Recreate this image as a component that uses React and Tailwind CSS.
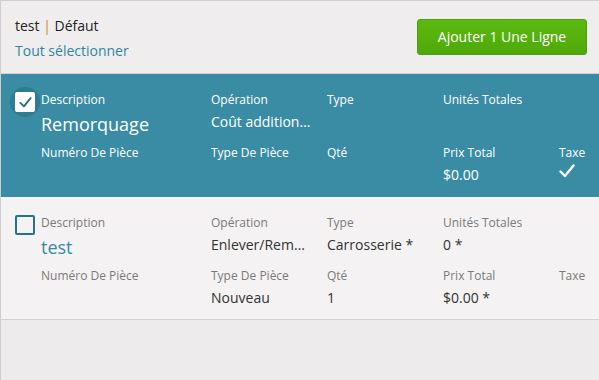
import React from "react";

const font = { fontFamily: '"Open Sans", "Noto Sans", sans-serif' };

function Check({ className }) {
  return (
    <svg viewBox="0 0 16 14" className={className} fill="none">
      <path d="M1.5 7.5 L6 12 L14.5 1.5" stroke="currentColor" strokeWidth="2.4" strokeLinecap="round" strokeLinejoin="round" />
    </svg>
  );
}

function Field({ label, value, selected, big, ellipsis, taxCheck, gap = "mt-[4px]" }) {
  const labelCls = selected ? "text-white" : "text-[#7a7a7a]";
  let valueCls = selected ? "text-white" : "text-[#333333]";
  if (big) valueCls = selected ? "text-white" : "text-[#3a8aa1]";
  return (
    <div className="min-w-0">
      <div className={`text-[12px] leading-[16px] ${labelCls}`}>{label}</div>
      {taxCheck ? (
        <div className="mt-[1px] h-[18px] flex items-center">
          <Check className="w-[16px] h-[14px] text-white" />
        </div>
      ) : value != null ? (
        <div
          className={`${gap} ${big ? "text-[18px] leading-[24px]" : "text-[14px] leading-[20px]"} ${valueCls} ${ellipsis ? "w-[100px] truncate" : ""}`}
        >
          {value}
        </div>
      ) : null}
    </div>
  );
}

function LineRow({ selected, data }) {
  return (
    <div
      className={`flex h-[123px] ${selected ? "bg-[#3a8ca4] h-[122px]" : "bg-[#f4f2f3] border-b border-[#d2d0d1]"}`}
    >
      <div className="w-[40px] pl-[14px] pt-[18px] shrink-0">
        {selected ? (
          <div className="relative w-[20px] h-[20px]">
            <div className="absolute -left-[5px] -top-[5px] w-[30px] h-[30px] rounded-full bg-[#2f7b91]" />
            <div className="absolute inset-0 rounded-[2px] bg-white flex items-center justify-center">
              <Check className="w-[13px] h-[11px] text-[#2c6f85]" />
            </div>
          </div>
        ) : (
          <div className="w-[20px] h-[20px] rounded-[2px] border-2 border-[#1f7393] bg-[#f4f2f3]" />
        )}
      </div>
      <div className="flex-1 pt-[18px]">
        <div className="grid grid-cols-[170px_116px_116px_116px_1fr] h-[53px]">
          <Field label="Description" value={data.desc} big selected={selected} />
          <Field label="Opération" value={data.op} ellipsis selected={selected} />
          <Field label="Type" value={data.type} selected={selected} />
          <Field label="Unités Totales" value={data.units} selected={selected} />
          <div />
        </div>
        <div className="grid grid-cols-[170px_116px_116px_116px_1fr]">
          <Field label="Numéro De Pièce" value={data.num} selected={selected} gap="mt-[4px]" />
          <Field label="Type De Pièce" value={data.ptype} selected={selected} gap="mt-[4px]" />
          <Field label="Qté" value={data.qty} selected={selected} gap="mt-[4px]" />
          <Field label="Prix Total" value={data.price} selected={selected} gap="mt-[4px]" />
          <Field label="Taxe" taxCheck={data.tax} selected={selected} />
        </div>
      </div>
    </div>
  );
}

export default function App() {
  return (
    <div className="w-[599px] h-[380px] overflow-hidden bg-[#edebec] border-l border-t border-[#cfcdce]" style={font}>
      <div className="h-[73px] bg-[#efedee] border-b border-[#d4d2d3] flex items-start justify-between pl-[14px] pr-[12px]">
        <div className="pt-[15px]">
          <div className="text-[14px] leading-[20px] text-[#222222]">
            test <span className="text-[#c98a2b]">|</span> Défaut
          </div>
          <div className="mt-[5px] text-[14px] leading-[20px] text-[#2f86a0]">Tout sélectionner</div>
        </div>
        <button className="mt-[18px] w-[170px] h-[36px] rounded-[3px] border border-[#4c9f0b] bg-gradient-to-b from-[#5cba0e] to-[#4fa80a] text-white text-[14px] leading-[20px]">
          Ajouter 1 Une Ligne
        </button>
      </div>
      <LineRow
        selected
        data={{ desc: "Remorquage", op: "Coût additionnel", price: "$0.00", tax: true }}
      />
      <LineRow
        data={{
          desc: "test",
          op: "Enlever/Remplacer",
          type: "Carrosserie *",
          units: "0 *",
          ptype: "Nouveau",
          qty: "1",
          price: "$0.00 *",
        }}
      />
    </div>
  );
}
